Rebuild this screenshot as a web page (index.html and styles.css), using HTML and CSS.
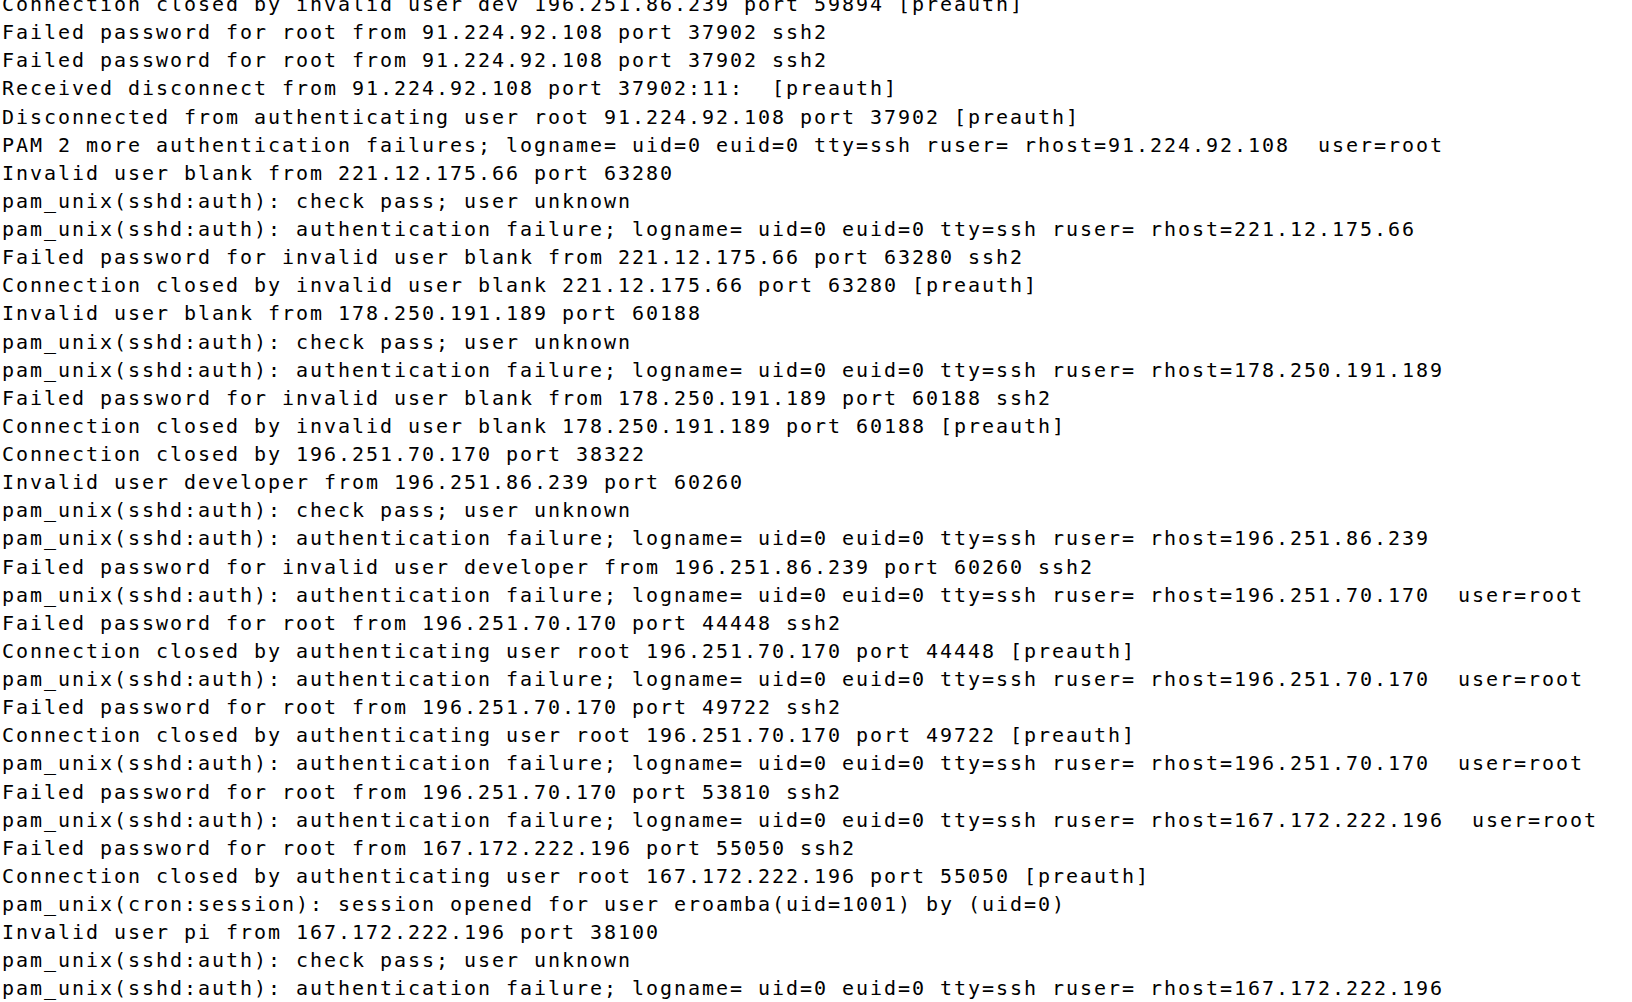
FILE: index.html
```html
<!DOCTYPE html>
<html>
<head>
<meta charset="utf-8">
<title>auth log</title>
<link rel="stylesheet" href="styles.css">
</head>
<body>
<pre class="log">Connection closed by invalid user dev 196.251.86.239 port 59894 [preauth]
Failed password for root from 91.224.92.108 port 37902 ssh2
Failed password for root from 91.224.92.108 port 37902 ssh2
Received disconnect from 91.224.92.108 port 37902:11:  [preauth]
Disconnected from authenticating user root 91.224.92.108 port 37902 [preauth]
PAM 2 more authentication failures; logname= uid=0 euid=0 tty=ssh ruser= rhost=91.224.92.108  user=root
Invalid user blank from 221.12.175.66 port 63280
pam_unix(sshd:auth): check pass; user unknown
pam_unix(sshd:auth): authentication failure; logname= uid=0 euid=0 tty=ssh ruser= rhost=221.12.175.66
Failed password for invalid user blank from 221.12.175.66 port 63280 ssh2
Connection closed by invalid user blank 221.12.175.66 port 63280 [preauth]
Invalid user blank from 178.250.191.189 port 60188
pam_unix(sshd:auth): check pass; user unknown
pam_unix(sshd:auth): authentication failure; logname= uid=0 euid=0 tty=ssh ruser= rhost=178.250.191.189
Failed password for invalid user blank from 178.250.191.189 port 60188 ssh2
Connection closed by invalid user blank 178.250.191.189 port 60188 [preauth]
Connection closed by 196.251.70.170 port 38322
Invalid user developer from 196.251.86.239 port 60260
pam_unix(sshd:auth): check pass; user unknown
pam_unix(sshd:auth): authentication failure; logname= uid=0 euid=0 tty=ssh ruser= rhost=196.251.86.239
Failed password for invalid user developer from 196.251.86.239 port 60260 ssh2
pam_unix(sshd:auth): authentication failure; logname= uid=0 euid=0 tty=ssh ruser= rhost=196.251.70.170  user=root
Failed password for root from 196.251.70.170 port 44448 ssh2
Connection closed by authenticating user root 196.251.70.170 port 44448 [preauth]
pam_unix(sshd:auth): authentication failure; logname= uid=0 euid=0 tty=ssh ruser= rhost=196.251.70.170  user=root
Failed password for root from 196.251.70.170 port 49722 ssh2
Connection closed by authenticating user root 196.251.70.170 port 49722 [preauth]
pam_unix(sshd:auth): authentication failure; logname= uid=0 euid=0 tty=ssh ruser= rhost=196.251.70.170  user=root
Failed password for root from 196.251.70.170 port 53810 ssh2
pam_unix(sshd:auth): authentication failure; logname= uid=0 euid=0 tty=ssh ruser= rhost=167.172.222.196  user=root
Failed password for root from 167.172.222.196 port 55050 ssh2
Connection closed by authenticating user root 167.172.222.196 port 55050 [preauth]
pam_unix(cron:session): session opened for user eroamba(uid=1001) by (uid=0)
Invalid user pi from 167.172.222.196 port 38100
pam_unix(sshd:auth): check pass; user unknown
pam_unix(sshd:auth): authentication failure; logname= uid=0 euid=0 tty=ssh ruser= rhost=167.172.222.196</pre>
</body>
</html>
```

FILE: styles.css
```css
html, body {
  margin: 0;
  padding: 0;
  background: #ffffff;
  overflow: hidden;
}

.log {
  margin: -10px 0 0 0;
  padding: 0 0 0 2px;
  font-family: "DejaVu Sans Mono", monospace;
  font-size: 20px;
  letter-spacing: 1.96px;
  line-height: 28.12px;
  color: #000000;
  white-space: pre;
}
```
